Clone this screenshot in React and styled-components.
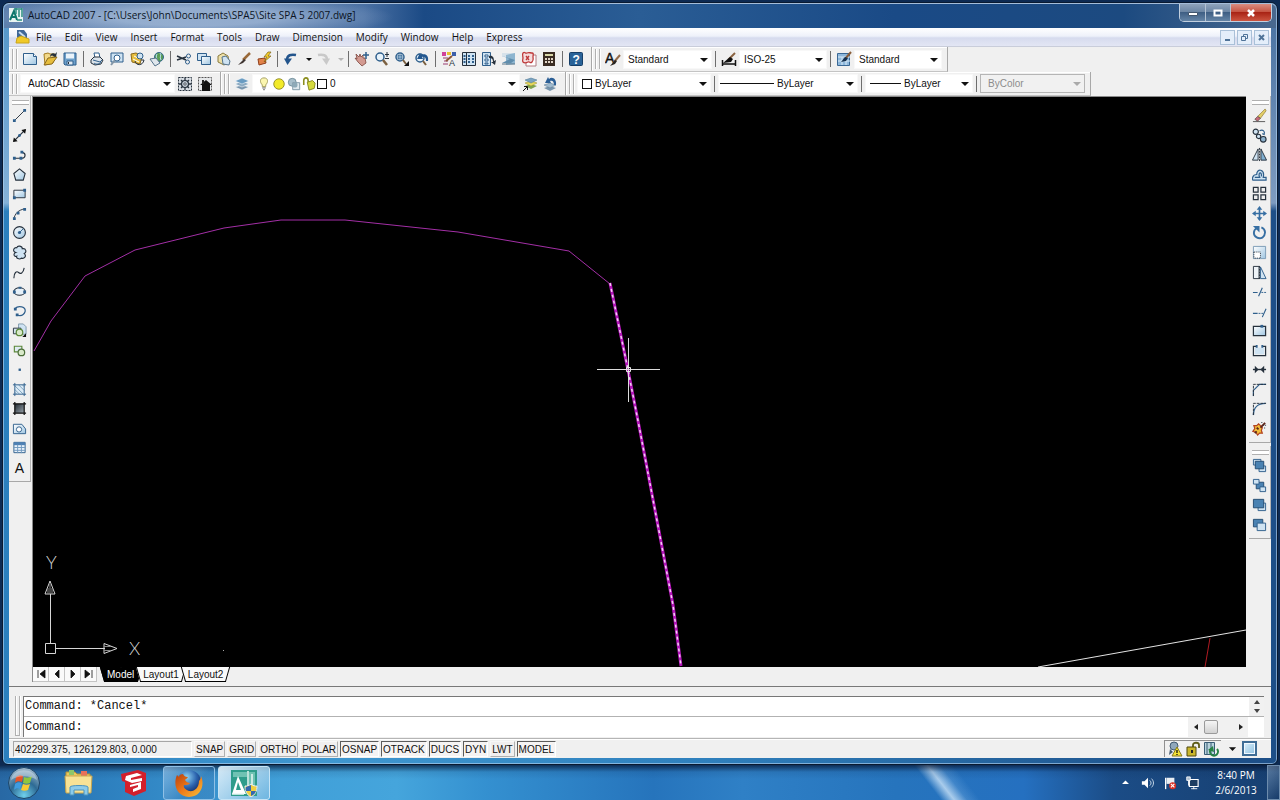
import React from 'react';
import styled, { createGlobalStyle, css } from 'styled-components';

const ui = '"Liberation Sans", Arial, sans-serif';
const shell = '"Open Sans", "Noto Sans", sans-serif';

const GlobalStyle = createGlobalStyle`
  * { box-sizing: border-box; }
  body { margin: 0; background: #0d2a52; font-family: ${ui}; font-size: 10px; color: #111; }
  button, select, input { font: inherit; color: inherit; margin: 0; }
`;

const Desktop = styled.div`
  display: flex;
  flex-direction: column;
  min-height: 100vh;
  padding-top: 2px;
`;

const AppWindow = styled.div`
  flex: 1;
  display: flex;
  flex-direction: column;
  margin: 0 2px;
  padding: 0 6px 6px;
  border: 1px solid #0a1a30;
  border-radius: 7px 7px 6px 6px;
  background:
    linear-gradient(to bottom, rgba(190, 210, 235, 0.25), rgba(205, 218, 238, 0.55) 200px, transparent 208px),
    linear-gradient(to right, #2b7fbd, #3f97d0 25%, #2f80bd 55%, #1d4f88 95%);
  box-shadow: inset 0 0 0 1px rgba(175, 208, 238, 0.65);
`;

const TitleBar = styled.header`
  display: flex;
  align-items: center;
  gap: 5px;
  height: 25px;
  margin: 0 -5px;
  padding: 0 4px 2px 5px;
  border-top: 1px solid #a5bdd9;
  border-radius: 6px 6px 0 0;
  background:
    radial-gradient(ellipse 200px 22px at 190px 13px, rgba(190, 208, 232, 0.6) 40%, transparent 100%),
    linear-gradient(to right, #5d7fac, #4a70a3 360px, #1b4a85 420px, #2a5d95 50%, #1a4a86 70%, #1c4a80 88%, #49698f);
  font: 10px ${shell};
`;

const Title = styled.h1`
  flex: 1;
  margin: 0;
  font: inherit;
  color: #0b1424;
  white-space: nowrap;
`;

const CaptionGroup = styled.div`
  display: flex;
  align-self: flex-start;
  height: 18px;
  border: 1px solid #c3d0df;
  border-top: 0;
  border-radius: 0 0 5px 5px;
  overflow: hidden;
`;

const CaptionButton = styled.button`
  display: grid;
  place-items: center;
  width: ${p => (p.$close ? 41 : 25)}px;
  padding: 0;
  border: 0;
  border-left: ${p => (p.$first ? '0' : '1px solid #b4c3d4')};
  background: ${p => p.$close
    ? 'linear-gradient(#d98d80, #c65644 45%, #a92415 50%, #cc5540)'
    : 'linear-gradient(#8ea3bb, #6d87a5 45%, #3f5f84 50%, #6484a6)'};
`;

const Client = styled.div`
  flex: 1;
  display: flex;
  flex-direction: column;
  min-width: 0;
  background: #f0f0f0;
`;

const MenuBar = styled.nav`
  display: flex;
  align-items: center;
  height: 19px;
  padding: 0 2px 0 6px;
  background: linear-gradient(#ffffff, #eef1fa 45%, #d6dbee 55%, #e3e6f4);
  border-bottom: 1px solid #c9cdda;
  font: 10px ${shell};
`;

const MenuList = styled.div`
  display: flex;
  gap: 1px;
`;

const MenuItem = styled.button`
  padding: 0 6px;
  border: 0;
  background: none;
`;

const Spacer = styled.div`flex: 1;`;

const MdiButton = styled.button`
  display: grid;
  place-items: center;
  width: 15px;
  height: 15px;
  margin-left: 2px;
  padding: 0;
  border: 1px solid #a9c0d8;
  background: #e4eefa;
`;

const ToolRow = styled.div`
  display: flex;
  height: ${p => p.$height}px;
`;

const Toolbar = styled.div`
  display: flex;
  align-items: center;
  padding: 0 5px 0 3px;
  border-right: 1px solid #a8a8a8;
  border-bottom: 1px solid #c4c4c4;
  box-shadow: inset 1px 1px 0 #fff;
`;

const Grip = styled.span`
  flex: none;
  width: 5px;
  height: 20px;
  margin-right: 3px;
  border-style: solid;
  border-color: #b0b0b0;
  border-width: 0 1px;
  box-shadow: inset 1px 0 0 #fff, 1px 0 0 #fff;
`;

const Divider = styled.span`
  width: 1px;
  height: 16px;
  margin: 0 3px;
  background: #6e6e6e;
`;

const ToolButton = styled.button`
  display: grid;
  place-items: center;
  flex: none;
  width: ${p => (p.$narrow ? 12 : 20)}px;
  height: 20px;
  padding: 0;
  border: 0;
  background: none;
`;

const ComboBox = styled.div`
  position: relative;
  display: flex;
  align-items: center;
  gap: 3px;
  width: ${p => p.$width}px;
  height: 19px;
  padding-left: ${p => p.$indent || 4}px;
  background: ${p => (p.$disabled ? '#f1f1f1' : '#fff')};
  border: 1px solid ${p => (p.$disabled ? '#b5b5b5' : '#f8f8f8')};
  color: ${p => (p.$disabled ? '#8c8c8c' : '#111')};
  &::after {
    content: '';
    position: absolute;
    right: 3px;
    top: 7px;
    border: 4px solid transparent;
    border-top-color: ${p => (p.$disabled ? '#aaa' : '#111')};
    border-bottom: 0;
    pointer-events: none;
  }
`;

const Select = styled.select`
  flex: 1;
  min-width: 0;
  height: 17px;
  padding: 0;
  border: 0;
  appearance: none;
  background: none;
  opacity: 1;
`;

const Swatch = styled.span`
  width: 10px;
  height: 10px;
  border: 1px solid #111;
  background: #fff;
`;

const LineSample = styled.span`
  width: ${p => p.$width}px;
  height: 1px;
  background: #111;
`;

const LayerFlags = styled.span`
  display: flex;
  align-items: center;
  gap: 1px;
`;

const Workspace = styled.main`
  flex: 1;
  display: flex;
  min-height: 0;
`;

const Dock = styled.aside`
  flex: none;
  width: ${p => (p.$right ? 25 : 23)}px;
  padding-left: ${p => (p.$right ? 3 : 0)}px;
  display: flex;
  flex-direction: column;
  gap: 3px;
`;

const Palette = styled.div`
  width: 22px;
  padding: 4px 1px 4px 0;
  border-right: 1px solid #b4b4b4;
  border-bottom: 1px solid #a8a8a8;
`;

const PaletteGrip = styled.div`
  height: 5px;
  margin: 0 0 1px 3px;
  border-top: 1px solid #b0b0b0;
  border-bottom: 1px solid #b0b0b0;
  background: #fff;
`;

const PaletteButtons = styled.div`
  display: flex;
  flex-direction: column;
  height: ${p => p.$height}px;
  button { flex: 1; height: auto; }
`;

const Document = styled.section`
  flex: 1;
  display: flex;
  flex-direction: column;
  min-width: 0;
  border-top: 1px solid #8a8a8a;
  border-left: 1px solid #8a8a8a;
`;

const Viewport = styled.div`
  flex: 1;
  min-height: 0;
  position: relative;
  background: #000;
  svg { position: absolute; inset: 0; width: 100%; height: 100%; }
`;

const TabStrip = styled.div`
  display: flex;
  align-items: stretch;
  height: 15px;
  background: #f0f0f0;
`;

const TabNav = styled.button`
  display: grid;
  place-items: center;
  width: 16px;
  padding: 0;
  border: 0;
  border-right: 1px solid #c4c4c4;
  border-bottom: 1px solid #c4c4c4;
  background: #fafafa;
`;

const Tabs = styled.div`
  display: flex;
  margin-left: 5px;
`;

const Tab = styled.button`
  position: relative;
  z-index: 0;
  margin-right: -1px;
  padding: 0 5px;
  border: 0;
  background: none;
  color: ${p => (p.$active ? '#fff' : '#111')};
  &::before, &::after {
    content: '';
    position: absolute;
    z-index: -1;
    top: 0;
    bottom: 0;
    background: ${p => (p.$active ? '#000' : '#fafafa')};
    border-bottom: 1px solid #000;
  }
  &::before { left: 0; right: 45%; border-left: 1px solid #000; transform: skewX(16deg); }
  &::after { right: 0; left: 45%; border-right: 1px solid #000; transform: skewX(-16deg); }
`;

const CommandPanel = styled.section`
  display: flex;
  margin-top: 4px;
  padding: 9px 7px 1px 6px;
  border-top: 1px solid #787878;
  font: 12px "Liberation Mono", "Courier New", monospace;
`;

const CommandGrip = styled(Grip)`
  height: 40px;
  border-bottom-width: 1px;
`;

const CommandLines = styled.div`
  flex: 1;
  min-width: 0;
  border-top: 1px solid #777;
  border-left: 1px solid #777;
  background: #fff;
`;

const CommandLine = styled.div`
  display: flex;
  align-items: center;
  height: 20px;
  padding-left: 1px;
  border-bottom: ${p => (p.$history ? '1px solid #b2b2b2' : '0')};
`;

const HistoryText = styled.div`
  flex: 1;
  align-self: flex-start;
  line-height: 18px;
`;

const PromptInput = styled.input`
  flex: 1;
  min-width: 0;
  border: 0;
  outline: 0;
  padding: 0 0 0 4px;
  background: none;
`;

const VerticalScroll = styled.div`
  display: flex;
  flex-direction: column;
  width: 15px;
  height: 19px;
  background: #f1f1f1;
`;

const HorizontalScroll = styled.div`
  display: flex;
  align-items: center;
  justify-content: space-between;
  width: 60px;
  height: 20px;
  margin-right: 16px;
  background: #f1f1f1;
`;

const ScrollButton = styled.button`
  display: grid;
  place-items: center;
  flex: ${p => (p.$fill ? 1 : 'none')};
  width: 15px;
  padding: 0;
  border: 0;
  background: none;
`;

const ScrollThumb = styled.span`
  width: 14px;
  height: 14px;
  margin-right: 14px;
  border: 1px solid #9a9a9a;
  border-radius: 2px;
  background: linear-gradient(#f5f5f5, #d2d2d2);
`;

const StatusBar = styled.footer`
  display: flex;
  align-items: center;
  gap: 2px;
  height: 20px;
  padding: 0 4px;
  border-top: 1px solid #b5b5b5;
  box-shadow: inset 0 1px 0 #fff;
`;

const Coordinates = styled.output`
  width: 179px;
  height: 16px;
  padding-left: 1px;
  line-height: 15px;
  border: 1px solid;
  border-color: #a6a6a6 #fff #fff #a6a6a6;
`;

const ModeToggle = styled.button`
  height: 16px;
  padding: 1px 1px 0;
  line-height: 13px;
  border: 1px solid;
  border-color: ${p => (p.$on ? '#5c5c5c #fff #fff #5c5c5c' : '#f7f7f7 #b0b0b0 #b0b0b0 #f7f7f7')};
  background: ${p => (p.$on ? '#f5f3f3' : '#f0eeee')};
`;

const StatusTray = styled.div`
  display: flex;
  align-items: center;
  gap: 2px;
  height: 17px;
  padding: 0 2px;
  border-top: 1px solid #909090;
  border-left: 1px solid #909090;
`;

const CleanScreen = styled.button`
  width: 15px;
  height: 15px;
  margin: 0 10px 0 5px;
  padding: 0;
  border: 2px solid #3f6d96;
  background: linear-gradient(135deg, #d9effb, #8fc0e0);
  box-shadow: inset 0 0 0 1px #f0f8ff;
`;

const TaskbarBar = styled.footer`
  display: flex;
  align-items: center;
  height: 35px;
  padding-left: 7px;
  background:
    linear-gradient(to bottom, rgba(4, 20, 50, 0.75), rgba(10, 40, 80, 0.12) 7px, transparent 14px),
    linear-gradient(52deg, transparent 72%, rgba(225, 242, 255, 0.7) 73%, rgba(170, 210, 245, 0.2) 74%, transparent 75%),
    linear-gradient(to right, #2868a4, #2d7fbe 8%, #409fd8 22%, #45a5dc 31%, #3490d0 38%, #2674bc 51%, #2f80c6 58%, #2674bd 70%, #2570c0 80%, #1b4c86 87%, #173f70);
`;

const StartButton = styled.button`
  width: 34px;
  height: 34px;
  margin-right: 9px;
  padding: 0;
  border: 0;
  background: none;
`;

const TaskButton = styled.button`
  display: grid;
  place-items: center;
  width: 52px;
  height: 34px;
  margin-left: 3px;
  padding: 0;
  border: 1px solid transparent;
  border-radius: 3px;
  background: none;
  ${p => p.$state === 'open' && css`
    border-color: #8fc0e6;
    background: linear-gradient(135deg, rgba(180, 215, 245, 0.55), rgba(60, 120, 180, 0.3) 60%);
  `}
  ${p => p.$state === 'active' && css`
    border-color: #c6e4f6;
    background: linear-gradient(135deg, rgba(240, 250, 255, 0.85), rgba(135, 195, 230, 0.65));
  `}
`;

const Tray = styled.div`
  display: flex;
  align-items: center;
  gap: 5px;
`;

const TrayButton = styled.button`
  display: grid;
  place-items: center;
  width: 17px;
  height: 24px;
  padding: 0;
  border: 0;
  background: none;
`;

const Clock = styled.time`
  width: 54px;
  margin-left: 4px;
  color: #fff;
  font: 10px/15px ${shell};
  text-align: center;
`;

const ShowDesktop = styled.button`
  width: 13px;
  height: 35px;
  margin-left: 4px;
  padding: 0;
  border: 1px solid #6d8cad;
  background: linear-gradient(135deg, rgba(190, 215, 240, 0.4), rgba(20, 50, 90, 0.3));
`;

const B = '#2f5f8c';
const D = '#26313d';
const L = '#cfe3f2';
const G = '#e6bd3c';

const glyphs = {
  fresh: <><path d="M1.500 2.500h10l3 3v8h-13z" fill="url(#sky)" stroke={B} /><path d="M11.500 2.500v3h3" fill="#fff" stroke={B} /></>,
  open: <><path d="M2 3l4-1 2 1h5l-2 9-8 2z" fill="#f2d98a" stroke="#a57d22" /><path d="M2 14l4-7 9-1-5 7z" fill={G} stroke="#8c6a1c" /><path d="M8 6c0-3 3-5 5-3l2-2-1 5-4-1 1-1c-1 0-2 1-3 2z" fill={D} /></>,
  save: <><path d="M2 2h12v12H3l-1-1z" fill="#6c9fca" stroke={B} /><path d="M4 2.500h8v5H4z" fill="#eaf3fa" /><path d="M5 10h6v4H5z" fill="#dfe9f2" stroke={B} /><path d="M6 11h1v2H6z" fill={D} /></>,
  print: <><path d="M5 2h5l1 5H6z" fill="#fff" stroke={B} /><path d="M2 9l3-3h6l3 3-2 4-6 1-4-2z" fill="#dbe3ea" stroke={D} /><path d="M4 9l7 2 2-2M5 12c2 2 6 1 7-1" fill="none" stroke={B} /></>,
  preview: <><path d="M2 2h12v9H2z" fill={L} stroke={B} /><circle cx="8" cy="7" r="3" fill="#fff" stroke={B} /><path d="M6 9l-4 5" stroke="#8295a6" strokeWidth="2" /></>,
  publish: <><path d="M2 3l5-1 6 3-2 8-8-2z" fill={G} stroke="#8c6a1c" /><path d="M5 5l6 3M4 8l6 3" stroke="#fff" /><circle cx="11" cy="5" r="3" fill={L} stroke={B} /><path d="M6 10c1 5 8 5 9-1l-3 0" fill="none" stroke={D} /></>,
  web: <><circle cx="10" cy="6" r="4.500" fill="#5a9d55" stroke="#35688e" /><path d="M8 3c-2 3 1 4-1 7M11 2c2 2-1 4 1 7" stroke="#b7dff0" fill="none" /><path d="M1 8l6-1 4 5-5 3z" fill="#dfe6ec" stroke="#55738c" /></>,
  cut: <><path d="M1 5l9 4M1 9l9-3" stroke={D} strokeWidth="1.500" /><circle cx="12.500" cy="5" r="2" fill="none" stroke={B} /><circle cx="11.500" cy="11" r="2" fill="none" stroke={B} /></>,
  copyclip: <><path d="M1.500 2.500h9v7h-9z" fill={L} stroke={B} /><path d="M5.500 5.500h9v8h-9z" fill="url(#sky)" stroke={B} /></>,
  paste: <><path d="M2 5l5-3 5 3 1 6-5 3-6-3z" fill="#ecdfa8" stroke="#8a7a3c" /><path d="M6 6l4-1 4 5-1 4-6-1z" fill={L} stroke="#55738c" /></>,
  brush: <><path d="M14 2L7 9" stroke="#9a6a3a" strokeWidth="2.500" /><path d="M8 8l-6 6 5-2 3-3z" fill="#3e3430" /></>,
  block: <><path d="M2 8l7-1 1 5-7 2z" fill="#e2834a" stroke="#8f3e1b" /><path d="M12 1L8 6h3l-3 5 7-6h-3l3-4z" fill="#f4ce2d" stroke="#7c6112" strokeWidth=".7" /></>,
  undo: <><path d="M4 9c0-5 4-6 9-5" fill="none" stroke="#23558c" strokeWidth="2.500" /><path d="M1 7.500h8L4.500 14z" fill="#23558c" /></>,
  redo: <><path d="M12 9c0-5-4-6-9-5" fill="none" stroke="#c9c9c9" strokeWidth="2.500" /><path d="M15 7.500H7l4.500 6.500z" fill="#c9c9c9" /></>,
  pan: <><path d="M2 3l3 3 1-3 1 3 2-2v3l2 0 1 5-4 3-4-4-3-4 2 1z" fill="#d39a91" stroke="#7d463e" strokeWidth=".8" /><path d="M12 1v7M9 4h6" stroke={B} strokeWidth="1.500" /></>,
  zoomrt: <><circle cx="6" cy="6" r="4" fill="#e7f2fa" stroke={B} strokeWidth="1.500" /><path d="M9 9l4 5" stroke="#7b6040" strokeWidth="2.500" /><path d="M13 1v5M11 3.500h4M11 7.500h4" stroke={D} /></>,
  zoomwin: <><circle cx="6" cy="6" r="4" fill="#e7f2fa" stroke={B} strokeWidth="1.500" /><path d="M4 4h4v4H4z" fill="#86aaca" stroke={B} strokeWidth=".8" /><path d="M9 9l3 4" stroke="#7b6040" strokeWidth="2" /><path d="M15 10v5h-5z" fill="#111" /></>,
  zoomprev: <><circle cx="6" cy="7" r="4" fill="#e7f2fa" stroke={B} strokeWidth="1.500" /><path d="M9 10l3 4" stroke="#7b6040" strokeWidth="2" /><path d="M14 10c1-6-3-8-7-6L6 2 3 8l6 0-1-2c3-1 4 1 4 4z" fill="#23578f" /></>,
  props: <><path d="M1 1h4v4H1z" fill="#d0429b" /><path d="M6 1h4v3H6z" fill="#e7bf31" /><path d="M11 1h4v4h-4z" fill="#3d60aa" /><path d="M2 7h5M3 10h4M2 13h5" stroke="#9a3a70" /><path d="M11 5l-6 5" stroke="#8b5534" strokeWidth="2" /><text x="8" y="15" fontSize="9" fill={D}>A</text></>,
  dcenter: <><path d="M1.500 1.500h13v13h-13z" fill={L} stroke={D} /><path d="M5.500 1.500v13" stroke={D} /><path d="M7 5h2M11 5h2M7 8h2M11 8h2M7 11h2M11 11h2M2.500 5h2M2.500 8h2M2.500 11h2" stroke={B} strokeWidth="2" /></>,
  palettes: <><path d="M1.500 1.500h8v13h-8z" fill={L} stroke={B} /><path d="M4 4h3v2H4zM4 8h3v2H4zM4 12h3v1H4z" fill="#fff" stroke={B} /><path d="M8 5c4-1 5 2 5 5l2-1-1 5-4-3 2 0c0-3-1-4-4-4z" fill={D} /></>,
  sheets: <><path d="M1 2h13v4H1z" fill="#d7e2ea" /><path d="M5 4l9-2v11l-9 1z" fill="#8eb5cf" /><path d="M1 5l8 3-8 4h9l4-3" fill="#5f8dad" /><path d="M1 13h13" stroke="#567286" /></>,
  markup: <><path d="M5 4h10v11H5z" fill="#fff" stroke="#b07a80" /><path d="M2 2c2-2 2 1 4 0s3 0 5 0 1 2 1 4 1 3-1 5-2-1-4 0-4 1-5 0 0-3 0-4-1-4 0-5z" fill="#f5dcdc" stroke="#be3838" strokeWidth="1.300" /><path d="M5 5l3 4M8 5L5 9" stroke="#be3838" strokeWidth="1.300" /></>,
  calc: <><path d="M2 1h12v14H2z" fill="#3a2c22" /><path d="M4 3h8v2H4z" fill="#d9d8a8" /><path d="M4 7h2v2H4zM7 7h2v2H7zM10 7h2v2h-2zM4 10h2v2H4zM7 10h2v2H7zM10 10h2v2h-2z" fill="#e2d6c8" /></>,
  help: <><rect x="1.500" y="1.500" width="13" height="13" rx="1" fill="#2a6398" stroke="#163f68" /><text x="4.500" y="12.500" fontSize="12" fontWeight="bold" fill="#fff">?</text></>,
  textstyle: <><text x="0" y="12" fontSize="14" fill="#111" stroke="#111" strokeWidth=".4">A</text><path d="M15 4l-6 7" stroke="#936b49" strokeWidth="2" /><path d="M10 9l-5 6 5-2 2-3z" fill="#282420" /></>,
  dimstyle: <><path d="M14 2L7 9" stroke="#8a6240" strokeWidth="2" /><path d="M9 6l-7 6 8-1 2-3z" fill="#111" /><path d="M1.500 9v6M14.500 9v6M2 13h12" stroke="#111" strokeWidth="1.500" /></>,
  tablestyle: <><path d="M1.500 2.500h12v12h-12z" fill="#8eb8dc" stroke="#3a6895" /><path d="M2 6h12M2 10h12M6 6v8M10 6v8" stroke="#d9eaf7" /><path d="M15 1L9 8" stroke="#8a5e3a" strokeWidth="2" /><path d="M9 6l-4 5 5-1 2-3z" fill="#15304e" /></>,
  gear: <><path d="M1.500 1.500h13v13h-13z" fill="#d9dee4" stroke={D} strokeDasharray="2 1" /><circle cx="8" cy="8" r="3.500" fill="#c3ccd5" stroke={D} strokeWidth="1.200" /><circle cx="8" cy="8" r="1.200" fill="#fff" stroke={D} strokeWidth=".8" /><path d="M8 2v3M8 11v3M2 8h3M11 8h3M4 4l2 2M10 10l2 2M12 4l-2 2M4 12l2-2" stroke={D} strokeWidth="1.300" /></>,
  home: <><path d="M1.500 1.500h13v13h-13z" fill="#e6e8ea" stroke="#555" strokeDasharray="2 1" /><path d="M3 9l6-5 6 5h-2v6H5V9z" fill="#111" /><path d="M5 4h2v4H5z" fill="#222" /></>,
  layers: <><path d="M1 11l7-2 7 2-7 3z" fill="#7895ad" stroke="#fff" strokeWidth=".5" /><path d="M1 8l7-3 7 3-7 3z" fill="#8dabc2" stroke="#fff" strokeWidth=".5" /><path d="M1 5l7-3 7 3-7 3z" fill="#6a9cc2" stroke="#fff" strokeWidth=".5" /></>,
  bulb: <><path d="M8 1c-5 0-5 5-2 8v2h4V9c3-3 3-8-2-8z" fill="#fbf6b0" stroke="#9b9654" /><path d="M6 12.500h4M7 14.500h2" stroke="#555" /></>,
  sun: <circle cx="8" cy="8" r="6" fill="#f2ea2a" stroke="#8c8722" />,
  vpfreeze: <><circle cx="6" cy="6" r="4.500" fill="#a8bfcb" stroke="#6f8b98" /><path d="M6.500 6.500h8v8h-8z" fill="#dfe9ee" stroke="#7690a0" /><circle cx="9" cy="9" r="3" fill="#8eaab8" /></>,
  unlock: <><path d="M2 9V4c0-4 5-4 5 0v3" fill="none" stroke="#8b8e1e" strokeWidth="1.800" /><path d="M6 6l6-2 3 3-1 6-6 2z" fill="#d5da3e" stroke="#80831e" /></>,
  layercur: <><path d="M3 10l6-2 6 2-6 3z" fill="#7fa34e" /><path d="M3 7l6-2 6 2-6 3z" fill="#e7d95a" stroke="#988a2a" strokeWidth=".5" /><path d="M3 4l6-2 6 2-6 3z" fill="#7ba3c0" stroke="#45708f" strokeWidth=".5" /><path d="M1 15l4-4M2 10.500h3.500V14" stroke="#111" fill="none" /></>,
  layerprev: <><path d="M2 12l6-2 6 2-6 3z" fill="#7895ad" /><path d="M2 9l6-2 6 2-6 3z" fill="#9fbace" stroke="#55738c" strokeWidth=".5" /><path d="M14 9c1-6-4-9-7-6L6 1 3 7l6 0-1-2c2-1 4 0 4 4z" fill="#2c5f96" /></>,
  line: <><path d="M2.500 13.500l11-11" stroke={D} /><path d="M1 12h3v3H1zM12 1h3v3h-3z" fill={B} /></>,
  xline: <><path d="M2 14L14 2" stroke={D} strokeWidth="1.300" /><path d="M1 15l1-5 4 4zM15 1l-5 1 4 4z" fill="#111" /><circle cx="8" cy="8" r="1.500" fill={B} /></>,
  pline: <><path d="M2 12h8c5 0 5-6 1-6" fill="none" stroke={D} strokeWidth="1.300" /><path d="M1 10.500h3v3H1zM8 10.500h3v3H8zM9 4h3v3H9z" fill={B} /></>,
  polygon: <path d="M8 2l6 5-2 7H4L2 7z" fill="url(#sky)" stroke={D} strokeWidth="1.200" />,
  rect: <><path d="M2 4.500h12v8H2z" fill="url(#sky)" stroke={D} /><path d="M1 11h3v3H1zM12 3h3v3h-3z" fill={B} /></>,
  arc: <><path d="M2 14C3 8 7 4 14 3" fill="none" stroke={D} /><path d="M1 12h3v3H1zM5 6h3v3H5zM12 2h3v3h-3z" fill={B} /></>,
  circle: <><circle cx="8" cy="8" r="6.300" fill="url(#sky)" stroke={D} strokeWidth="1.200" /><path d="M8 8l4-4" stroke={B} /><circle cx="8" cy="8" r="1.700" fill={B} /></>,
  cloud: <path d="M4 8C0 7 2 2 5 3c1-3 6-2 6 1 4-1 5 4 2 5 3 3 0 6-3 5-2 2-6 0-5-2-3 1-4-3-1-4z" fill={L} stroke={D} strokeWidth="1.200" />,
  spline: <path d="M2 14C2 8 5 6 7 8s5 1 6-5" fill="none" stroke={D} strokeWidth="1.200" />,
  ellipse: <><ellipse cx="8" cy="8" rx="6" ry="4" fill="#e6f0f8" stroke={D} strokeWidth="1.200" /><path d="M1 7h3v3H1zM12 7h3v3h-3zM7 3h3v2H7z" fill={B} /></>,
  earc: <><path d="M3 5c4-4 12-2 11 3-1 3-4 5-8 4" fill="none" stroke={B} strokeWidth="1.300" /><path d="M4 10h3v3H4zM2 4h3v3H2z" fill={B} /></>,
  insert: <><path d="M7 1h5l3 3v8H7z" fill={L} stroke="#7e99ac" /><path d="M1.500 5.500h8v6h-8z" fill="#d2e2ef" stroke={D} /><circle cx="8" cy="10" r="3.500" fill="#d9e9ca" stroke="#5b8739" strokeWidth="1.300" /><path d="M15 11v4h-4z" fill="#111" /></>,
  makeblock: <><path d="M2.500 3.500h8v6h-8z" fill="#dfeaf3" stroke="#5b8739" strokeWidth="1.200" /><circle cx="10" cy="10" r="3.500" fill="#d9e9ca" stroke="#4b6e39" strokeWidth="1.300" /></>,
  point: <path d="M7 7h2.500v2.500H7z" fill={B} />,
  hatch: <><path d="M3 3h10v10H3z" fill="#dcebf6" /><path d="M3 4l9 9M3 8l5 5M7 3l6 6M11 3l2 2M3 11l2 2" stroke="#7ba0bd" /><path d="M3 1v14M13 1v14M1 3h14M1 13h14" stroke={B} /></>,
  gradient: <><path d="M3 3h10v10H3z" fill="url(#dusk)" /><path d="M3 1v14M13 1v14M1 3h14M1 13h14" stroke="#111" strokeWidth="1.300" /></>,
  region: <><path d="M1.500 3.500h9l4 5v5h-13z" fill="url(#sky)" stroke={B} /><circle cx="7.500" cy="9" r="2.800" fill="#fff" stroke={B} /></>,
  table: <><path d="M2 2.500h12v11H2z" fill="#e8f1fa" stroke={B} /><path d="M2 4h12" stroke="#4e80b4" strokeWidth="3" /><path d="M2 8h12M2 11h12M6 5v9M10 5v9" stroke="#7099bf" /></>,
  mtext: <text x="3" y="13.500" fontSize="15" fill="#111">A</text>,
  erase: <><path d="M14 1L6 9l3 2 6-8z" fill="#e3cf68" stroke="#8c742c" strokeWidth=".7" /><path d="M6 9l-3 3 3 2 3-3z" fill="#c96a78" stroke="#444" strokeWidth=".7" /><path d="M1 14.500h13" stroke="#555" /></>,
  copy: <><circle cx="4" cy="4" r="2.800" fill={L} stroke={D} strokeWidth="1.200" /><circle cx="7" cy="9" r="2.300" fill={L} stroke={D} strokeWidth="1.200" /><circle cx="12" cy="12" r="3" fill="#8bb0cc" stroke={D} strokeWidth="1.200" /><path d="M8 3c4-2 6 1 5 4l-2-1" fill="none" stroke={B} strokeWidth="1.200" /></>,
  mirror: <><path d="M6.500 2v12h-6z" fill={L} stroke={D} /><path d="M9.500 2v12h6z" fill="#7faed0" stroke={D} /><path d="M8 1v14" stroke={D} strokeDasharray="2 1" /></>,
  offset: <><path d="M1 14h14v-3h-3C14 2 5 1 5 8c-5 0-5 6-4 6z" fill={L} stroke={B} strokeWidth="1.300" /><path d="M3 11h6M8 11c-2-6 3-6 2-1" fill="none" stroke={B} strokeWidth="1.300" /></>,
  array: <path d="M1.500 1.500h5v5h-5zM9.500 1.500h5v5h-5zM1.500 9.500h5v5h-5zM9.500 9.500h5v5h-5z" fill="#eee" stroke={D} strokeWidth="1.300" />,
  move: <><path d="M8 2v12M2 8h12" stroke="#376fa3" strokeWidth="1.800" /><path d="M8 0l3 4H5zM8 16l3-4H5zM0 8l4-3v6zM16 8l-4-3v6z" fill="#376fa3" /></>,
  rotate: <><path d="M10 2.500c5 2 5 8 1 11-4 2-9-1-9-5 0-2 1-4 3-5" fill="none" stroke="#376fa3" strokeWidth="2" /><path d="M1 1h7v7z" fill="#376fa3" /></>,
  scale: <><path d="M1.500 1.500h13v13h-13z" fill="url(#sky)" stroke="#7b9bb5" /><path d="M2 7.500h7V14H2z" fill="#fff" stroke={D} strokeDasharray="1 1" /></>,
  stretch: <><path d="M1.500 1.500h6v13h-6z" fill="#eef3f7" stroke={D} /><path d="M9 2l6 12.500H9z" fill={L} stroke={B} /><path d="M8 1v14" stroke={D} strokeDasharray="2 1" /></>,
  trim: <><path d="M1 9h5M7 13l4-9" stroke={B} strokeWidth="1.200" /><path d="M10 9h5" stroke={B} strokeDasharray="2 1" /></>,
  extend: <><path d="M1 10h5M11 14l4-9" stroke={B} strokeWidth="1.200" /><path d="M7 10h5" stroke={B} strokeDasharray="2 1" /></>,
  breakpt: <><path d="M1.500 3.500h13v10h-13z" fill="url(#sky)" stroke={D} strokeWidth="1.300" /><path d="M9 2h3v3H9z" fill={B} /></>,
  breakln: <><path d="M3 5h10v7H3z" fill={L} /><path d="M5 3.500H1.500v10h13v-10H11" fill="none" stroke={D} strokeWidth="1.300" /><path d="M4 2h2v3H4zM10 2h2v3h-2z" fill={B} /></>,
  join: <><path d="M1 8h14" stroke={D} strokeWidth="1.500" /><path d="M3 4l4 4-4 4zM13 4L9 8l4 4z" fill={D} /></>,
  chamfer: <><path d="M1.500 15V9L8 2.500h7" fill="none" stroke={B} strokeWidth="1.300" /><path d="M1.500 15V2.500H15" fill="none" stroke={D} strokeDasharray="3 1" /></>,
  fillet: <><path d="M1.500 15c0-8 5-12.500 13-12.500" fill="none" stroke={B} strokeWidth="1.500" /><path d="M1.500 15V2.500H15" fill="none" stroke={D} strokeDasharray="3 1" /></>,
  explode: <><path d="M2 5l3 0 2-2 2 2 2 2-1 3 1 3-3 0-2 2-2-3-3-1 2-3z" fill="#f2be3a" stroke="#b3431f" strokeWidth="1.300" /><path d="M3 13l2-2M5 7l2 2M9 7l5-5" stroke="#5e2418" strokeWidth="2" /><path d="M10 1h1v1h-1zM14 4h1v1h-1zM13 7h1v1h-1zM12 4h1v1h-1z" fill={D} /></>,
  front: <><path d="M1.500 1.500h8v6h-8zM7.500 8.500h7v6h-7z" fill={L} stroke={B} /><path d="M3.500 3.500h9v8h-9z" fill="#4a82b2" stroke="#234c72" /></>,
  back: <><path d="M4.500 4.500h8v7h-8z" fill="#4a82b2" stroke="#234c72" /><path d="M1.500 1.500h6v5h-6zM8.500 9.500h6v5h-6z" fill={L} stroke={B} /></>,
  above: <><path d="M6.500 6.500h8v8h-8z" fill={L} stroke={B} /><path d="M1.500 2.500h11v9h-11z" fill="#4a82b2" stroke="#234c72" /></>,
  under: <><path d="M1.500 2.500h10v8h-10z" fill="#4a82b2" stroke="#234c72" /><path d="M5.500 6.500h9v8h-9z" fill={L} stroke={B} /></>,
  caret: <path d="M5 7h6l-3 3z" fill="#111" />,
  caretoff: <path d="M5 7h6l-3 3z" fill="#b5b5b5" />,
  commcenter: <><ellipse cx="7" cy="5" rx="4" ry="4" fill="#8fa7bb" stroke="#425a70" /><path d="M3 8l3 3-4 3z" fill="#425a70" /><path d="M10 6l5 9H5z" fill="#f5e435" stroke="#86791d" /><path d="M10 9v3M10 13v1" stroke="#111" strokeWidth="1.300" /></>,
  padlock: <><path d="M8 7V4c0-3 6-3 6 0v3" fill="none" stroke="#5e5d19" strokeWidth="1.800" /><path d="M2 6h9v9H2z" fill="#c9b52a" stroke="#4f490f" /><path d="M6 9h2v3H6z" fill="#222" /></>,
  standards: <><path d="M1.500 1.500h10v12h-10z" fill="#b9d3dd" stroke="#395c75" /><path d="M4 2v11M8 2v11" stroke="#395c75" /><path d="M14 8a4 4 0 1 1-6 0" fill="none" stroke="#268144" strokeWidth="2" /><path d="M5 9l5-4 1 6z" fill="#268144" /></>,
  chevup: <path d="M3 10l5-5 5 5z" fill="#fff" />,
  sound: <><path d="M1 6h3l4-4v12l-4-4H1z" fill="#fff" /><path d="M10 5c2 2 2 4 0 6M12 3c3 3 3 7 0 10" stroke="#dce9f5" fill="none" /></>,
  flag: <><path d="M3 2v13" stroke="#fff" strokeWidth="1.500" /><path d="M4 2h9v7H4z" fill="#e9eef3" /><circle cx="11" cy="11" r="4" fill="#d72f24" /><path d="M9 9l4 4M13 9l-4 4" stroke="#fff" strokeWidth="1.300" /></>,
  network: <><path d="M5 4h10v8H5z" fill="#1d3d62" stroke="#fff" strokeWidth="1.300" /><path d="M7 14.500h7M10 12v3" stroke="#fff" /><path d="M2 1h4v4H2zM4 5v6" stroke="#fff" fill="#a9bccf" /></>,
};

const Glyph = ({ name, size = 16 }) => (
  <svg width={size} height={size} viewBox="0 0 16 16" fill="none" fontFamily="Liberation Sans" aria-hidden="true">{glyphs[name]}</svg>
);

const Defs = () => (
  <svg width="0" height="0" style={{ position: 'absolute' }} aria-hidden="true">
    <defs>
      <linearGradient id="sky" x1="0" y1="0" x2="1" y2="1"><stop stopColor="#fff" /><stop offset="1" stopColor="#9fc6e2" /></linearGradient>
      <linearGradient id="dusk" x1="0" y1="0" x2="1" y2="1"><stop stopColor="#222b33" /><stop offset="1" stopColor="#9aa5ad" /></linearGradient>
      <radialGradient id="orb" cx=".5" cy=".9" r=".9"><stop stopColor="#6fd0ec" /><stop offset=".5" stopColor="#2d6a94" /><stop offset="1" stopColor="#a8bfd0" /></radialGradient>
      <radialGradient id="globe" cx=".4" cy=".3" r=".7"><stop stopColor="#8ed4f4" /><stop offset=".6" stopColor="#2b63ae" /><stop offset="1" stopColor="#122c66" /></radialGradient>
      <linearGradient id="fox" x1="0" y1="0" x2="1" y2="1"><stop stopColor="#b8400f" /><stop offset=".5" stopColor="#ee7b1a" /><stop offset="1" stopColor="#f8c23a" /></linearGradient>
    </defs>
  </svg>
);

const Tool = ({ name, label, narrow, size = 16 }) => (
  <ToolButton type="button" aria-label={label || name} $narrow={narrow}><Glyph name={name} size={size} /></ToolButton>
);

const renderTools = (items, size) => items.map((it, i) => {
  if (it === '|') return <Divider key={i} />;
  return <Tool key={i} name={it} narrow={it.startsWith('caret')} size={size} />;
});

const Combo = ({ label, value, width, indent, disabled, children }) => (
  <ComboBox $width={width} $indent={indent} $disabled={disabled}>
    {children}
    <Select aria-label={label} disabled={disabled} defaultValue={value}><option>{value}</option></Select>
  </ComboBox>
);

const standardTools = ['fresh', 'open', 'save', '|', 'print', 'preview', 'publish', 'web', '|', 'cut', 'copyclip', 'paste', 'brush', 'block', '|', 'undo', 'caret', 'redo', 'caretoff', '|', 'pan', 'zoomrt', 'zoomwin', 'zoomprev', '|', 'props', 'dcenter', 'palettes', 'sheets', 'markup', 'calc', '|', 'help'];
const drawTools = ['line', 'xline', 'pline', 'polygon', 'rect', 'arc', 'circle', 'cloud', 'spline', 'ellipse', 'earc', 'insert', 'makeblock', 'point', 'hatch', 'gradient', 'region', 'table', 'mtext'];
const modifyTools = ['erase', 'copy', 'mirror', 'offset', 'array', 'move', 'rotate', 'scale', 'stretch', 'trim', 'extend', 'breakpt', 'breakln', 'join', 'chamfer', 'fillet', 'explode'];
const orderTools = ['front', 'back', 'above', 'under'];
const menus = ['File', 'Edit', 'View', 'Insert', 'Format', 'Tools', 'Draw', 'Dimension', 'Modify', 'Window', 'Help', 'Express'];
const modes = [['SNAP'], ['GRID'], ['ORTHO'], ['POLAR'], ['OSNAP', 1], ['OTRACK', 1], ['DUCS', 1], ['DYN', 1], ['LWT'], ['MODEL', 1]];
const navs = [['First tab', 'M3 2v8M10 2L5 6l5 4z'], ['Previous tab', 'M8 2L4 6l4 4z'], ['Next tab', 'M4 2l4 4-4 4z'], ['Last tab', 'M9 2v8M2 2l5 4-5 4z']];

const VerticalTools = ({ label, tools, height }) => (
  <Palette role="toolbar" aria-label={label}>
    <PaletteGrip />
    <PaletteButtons $height={height}>{renderTools(tools, 15)}</PaletteButtons>
  </Palette>
);

const Drawing = () => (
  <svg viewBox="33 97 1213 570" preserveAspectRatio="xMinYMin slice" fill="none" role="img" aria-label="Site drawing">
    <path d="M34 351l17-30 34-45 50-26 89-22 57-8h64l113 12 111 19 41 33" stroke="#a32fa6" />
    <path d="M610 283l18 87 12 61 33 174 8 61" stroke="#b414ba" strokeWidth="3" />
    <path d="M610 283l18 87 12 61 33 174 8 61" stroke="#f3d3f3" strokeWidth="1.500" strokeDasharray="3 3" />
    <path d="M597 369.500h63M628.500 338v64" stroke="#dcdcdc" />
    <path d="M626.500 367.500h4v4h-4z" stroke="#e8e8e8" />
    <path d="M1038 667l208-37" stroke="#e4e4e4" />
    <path d="M1210 638l-5 29" stroke="#b01a22" />
    <g stroke="#d6d6d6">
      <path d="M45.500 643.500h10v10h-10zM50.500 643v-49M56 648.500h49M50 581l-5 13h10zM117 648.500l-13-5v10z" />
      <path d="M50 584v10M52 588v6M48 588v6M104 646.500h7M104 650.500h7" stroke="#888" />
    </g>
    <g fill="#d2d2d2" fontFamily="Lato" fontWeight="300" fontSize="18">
      <text x="46" y="569">Y</text>
      <text x="129" y="655">X</text>
    </g>
    <path d="M223 650h1v1h-1z" fill="#aaa" />
  </svg>
);

const AcadLogo = () => (
  <svg width="14" height="14" viewBox="0 0 14 14" aria-hidden="true">
    <path d="M0 0h14v14H0z" fill="#e8f4f2" /><path d="M1 12L5 3l3 9M2 9h5" stroke="#0e786c" strokeWidth="2" fill="none" />
    <path d="M7 0v6M10 2v7M13 0v9M5 1h8M8 12h5" stroke="#2a8c80" strokeWidth="1.500" />
  </svg>
);

export default function App() {
  return (
    <>
      <GlobalStyle />
      <Defs />
      <Desktop>
        <AppWindow>
          <TitleBar>
            <AcadLogo />
            <Title>AutoCAD 2007 - [C:\Users\John\Documents\SPA5\Site SPA 5 2007.dwg]</Title>
            <CaptionGroup>
              <CaptionButton $first aria-label="Minimize"><svg width="12" height="8"><path d="M1.500 3.500h9v3h-9z" fill="#fff" stroke="#42566e" /></svg></CaptionButton>
              <CaptionButton aria-label="Maximize"><svg width="12" height="10"><path d="M2.500 2.500h7v5h-7z" fill="none" stroke="#fff" strokeWidth="2" /></svg></CaptionButton>
              <CaptionButton $close aria-label="Close"><svg width="12" height="10"><path d="M3 2l6 6M9 2L3 8" stroke="#fff" strokeWidth="2.500" /></svg></CaptionButton>
            </CaptionGroup>
          </TitleBar>
          <Client>
            <MenuBar>
              <svg width="15" height="14" viewBox="0 0 15 14" aria-hidden="true"><path d="M2 0h7l3 4v7H2z" fill="#3f6796" /><path d="M4 2l6 5" stroke="#c7dcef" strokeWidth="2" /><path d="M1 13l1-5 4-2 8 3v4z" fill="#f0c928" stroke="#c9a51c" /></svg>
              <MenuList>{menus.map(m => <MenuItem key={m}>{m}</MenuItem>)}</MenuList>
              <Spacer />
              <MdiButton aria-label="Minimize drawing"><svg width="9" height="9"><path d="M2 7h5" stroke="#4f7398" strokeWidth="2" /></svg></MdiButton>
              <MdiButton aria-label="Restore drawing"><svg width="9" height="9"><path d="M3.500 3V1.500h4v4H6M1.500 3.500h4v4h-4z" fill="none" stroke="#4f7398" /></svg></MdiButton>
              <MdiButton aria-label="Close drawing"><svg width="9" height="9"><path d="M2 2l5 5M7 2L2 7" stroke="#4f7398" strokeWidth="2" /></svg></MdiButton>
            </MenuBar>
            <ToolRow $height={25}>
              <Toolbar role="toolbar" aria-label="Standard"><Grip />{renderTools(standardTools)}</Toolbar>
              <Toolbar role="toolbar" aria-label="Styles">
                <Grip />
                <Tool name="textstyle" /><Combo label="Text style" value="Standard" width={89} />
                <Divider />
                <Tool name="dimstyle" /><Combo label="Dimension style" value="ISO-25" width={88} />
                <Divider />
                <Tool name="tablestyle" /><Combo label="Table style" value="Standard" width={88} />
              </Toolbar>
            </ToolRow>
            <ToolRow $height={24}>
              <Toolbar role="toolbar" aria-label="Workspaces">
                <Grip />
                <Combo label="Workspace" value="AutoCAD Classic" width={155} indent={7} />
                <Tool name="gear" /><Tool name="home" />
              </Toolbar>
              <Toolbar role="toolbar" aria-label="Layers">
                <Grip />
                <Tool name="layers" />
                <Combo label="Layer" value="0" width={268} indent={4}>
                  <LayerFlags>{['bulb', 'sun', 'vpfreeze', 'unlock'].map(n => <Glyph key={n} name={n} size={14} />)}<Swatch /></LayerFlags>
                </Combo>
                <Tool name="layercur" /><Tool name="layerprev" />
              </Toolbar>
              <Toolbar role="toolbar" aria-label="Properties">
                <Grip />
                <Combo label="Color" value="ByLayer" width={134} indent={4}><Swatch /></Combo>
                <Divider />
                <Combo label="Linetype" value="ByLayer" width={140} indent={1}><LineSample $width={54} /></Combo>
                <Divider />
                <Combo label="Lineweight" value="ByLayer" width={108}><LineSample $width={31} /></Combo>
                <Divider />
                <Combo label="Plot style" value="ByColor" width={105} indent={7} disabled />
              </Toolbar>
            </ToolRow>
            <Workspace>
              <Dock><VerticalTools label="Draw" tools={drawTools} height={371} /></Dock>
              <Document>
                <Viewport><Drawing /></Viewport>
                <TabStrip>
                  {navs.map(([label, d]) => (
                    <TabNav key={label} aria-label={label}><svg width="12" height="12"><path d={d} fill="#111" stroke="#111" strokeWidth=".8" /></svg></TabNav>
                  ))}
                  <Tabs><Tab $active>Model</Tab><Tab>Layout1</Tab><Tab>Layout2</Tab></Tabs>
                </TabStrip>
              </Document>
              <Dock $right>
                <VerticalTools label="Modify" tools={modifyTools} height={332} />
                <VerticalTools label="Draw order" tools={orderTools} height={78} />
              </Dock>
            </Workspace>
            <CommandPanel>
              <CommandGrip />
              <CommandLines>
                <CommandLine $history>
                  <HistoryText>Command: *Cancel*</HistoryText>
                  <VerticalScroll>
                    <ScrollButton $fill aria-label="Scroll up"><svg width="6" height="4"><path d="M0 4l3-4 3 4z" fill="#444" /></svg></ScrollButton>
                    <ScrollButton $fill aria-label="Scroll down"><svg width="6" height="4"><path d="M0 0l3 4 3-4z" fill="#444" /></svg></ScrollButton>
                  </VerticalScroll>
                </CommandLine>
                <CommandLine>
                  <label htmlFor="prompt">Command:</label>
                  <PromptInput id="prompt" />
                  <HorizontalScroll>
                    <ScrollButton aria-label="Scroll left"><svg width="4" height="6"><path d="M4 0L0 3l4 3z" fill="#222" /></svg></ScrollButton>
                    <ScrollThumb />
                    <ScrollButton aria-label="Scroll right"><svg width="4" height="6"><path d="M0 0l4 3-4 3z" fill="#222" /></svg></ScrollButton>
                  </HorizontalScroll>
                </CommandLine>
              </CommandLines>
            </CommandPanel>
            <StatusBar>
              <Coordinates>402299.375, 126129.803, 0.000</Coordinates>
              {modes.map(([m, on]) => <ModeToggle key={m} $on={on} aria-pressed={!!on}>{m}</ModeToggle>)}
              <Spacer />
              <StatusTray>{['commcenter', 'padlock', 'standards'].map(n => <Glyph key={n} name={n} />)}</StatusTray>
              <Tool name="caret" label="Tray menu" narrow size={19} />
              <CleanScreen aria-label="Clean screen" />
            </StatusBar>
          </Client>
        </AppWindow>
        <TaskbarBar>
          <StartButton aria-label="Start">
            <svg width="34" height="34" viewBox="0 0 34 34">
              <circle cx="17" cy="17" r="15.500" fill="url(#orb)" stroke="#1c466b" />
              <path d="M9 11c3-2 5-2 7-1l-1 6c-3-1-5-1-7 1z" fill="#e8552a" /><path d="M17 11c3 1 5 1 8-1l-2 7c-2 1-5 1-7 0z" fill="#8fc73e" />
              <path d="M8 18c2-2 5-2 7-1l-2 6c-2-1-4-1-6 1z" fill="#3f9ce0" /><path d="M16 18c2 1 5 1 7 0l-2 6c-2 1-5 1-7 0z" fill="#f8ca32" />
              <path d="M4 14C6 1 28 1 30 14 22 9 12 9 4 14z" fill="#fff" opacity=".35" />
            </svg>
          </StartButton>
          <TaskButton aria-label="Windows Explorer">
            <svg width="30" height="28" viewBox="0 0 30 28">
              <path d="M2 3h9l2 2h13v18H2z" fill="#e9c860" stroke="#b38f35" /><path d="M5 1h5v5H5z" fill="#8dc66a" /><path d="M17 2h6v5h-6z" fill="#e7705a" />
              <path d="M1 7h27l-1 17H2z" fill="#f7e296" stroke="#c7a550" /><path d="M6 26v-8c0-2 18-2 18 0v8h-4v-5H10v5z" fill="#8ccbea" stroke="#4a93bd" />
            </svg>
          </TaskButton>
          <TaskButton aria-label="SketchUp">
            <svg width="28" height="28" viewBox="0 0 28 28">
              <path d="M1 5l17-4 8 3v18l-12 5-9-4V13l-3-1z" fill="#d3202c" />
              <path d="M6 7l11-3 5 2-11 3v2l11-2v3l-10 2-7-3zM10 16l11-3v7l-8 3v-3l5-2v-2l-8 2z" fill="#fff" />
            </svg>
          </TaskButton>
          <TaskButton aria-label="Firefox" $state="open">
            <svg width="30" height="30" viewBox="0 0 30 30">
              <circle cx="15" cy="14" r="12" fill="url(#globe)" />
              <path d="M3 7c-4 9-1 21 12 22 12 0 16-12 12-21 0 2-1 4-2 5 0 7-5 11-10 10-4-1-6-4-5-6 2 0 5 0 6-2-2 0-4-1-5-3 0-1 2-1 3-3-3 0-4-1-5-3-2 0-4 1-4 3z" fill="url(#fox)" />
            </svg>
          </TaskButton>
          <TaskButton aria-label="AutoCAD 2007" $state="active">
            <svg width="28" height="28" viewBox="0 0 28 28">
              <path d="M1 1h26v26H1z" fill="#2e9c8b" /><path d="M3 3h14v5H3zM19 3h6v15h-6z" fill="#6fc2b3" /><path d="M2 25L8 7l8 18zM8 13l-2 8h5z" fill="#fff" fillRule="evenodd" /><path d="M18 2v15M22 5v12M2 25h12" stroke="#eaf8f5" strokeWidth="1.500" />
              <path d="M21 15c2 2 4 2 6 2 0 5-2 9-6 11-4-2-6-6-6-11 2 0 4 0 6-2z" fill="#f1cf3e" stroke="#e6eef4" /><path d="M21 16v6h-5c-1-2 0-4 0-4zM21 22h5c-1 3-3 4-5 5z" fill="#3568ae" />
            </svg>
          </TaskButton>
          <Spacer />
          <Tray>
            {['chevup', 'sound', 'flag', 'network'].map(n => <TrayButton key={n} aria-label={n}><Glyph name={n} size={n === 'chevup' ? 11 : 14} /></TrayButton>)}
            <Clock>8:40 PM<br />2/6/2013</Clock>
          </Tray>
          <ShowDesktop aria-label="Show desktop" />
        </TaskbarBar>
      </Desktop>
    </>
  );
}
